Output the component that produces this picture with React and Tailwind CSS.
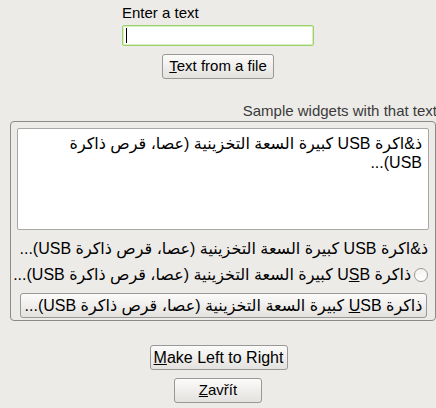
import React from "react";

const arabic = "كبيرة السعة التخزينية (عصا، قرص ذاكرة USB)...";

function GtkButton({ className = "", children }) {
  return (
    <div
      className={
        "flex items-center justify-center whitespace-nowrap rounded-[3px] border border-[#989898] bg-gradient-to-b from-[#fbfbfa] to-[#e4e2df] text-[15px] text-black " +
        className
      }
    >
      {children}
    </div>
  );
}

export default function App() {
  return (
    <div
      className="relative h-[408px] w-[436px] overflow-hidden bg-[#edebe8] text-black"
      style={{ fontFamily: '"Liberation Sans", "DejaVu Sans", sans-serif' }}
    >
      <div className="flex flex-col items-center">
        <div className="flex w-[192px] flex-col">
          <div className="mt-[4px] h-[17px] text-[15px] leading-[17px]">Enter a text</div>
          <div className="mt-[4px] flex h-[21px] items-center rounded-[2px] border border-[#9bd06a] bg-white pl-[3px] shadow-[inset_0_0_0_1px_#d8f0c0]">
            <div className="h-[15px] w-px bg-black" />
          </div>
        </div>
        <GtkButton className="mt-[8px] h-[25px] w-[112px]">
          <span>
            <u>T</u>ext from a file
          </span>
        </GtkButton>
      </div>

      <div className="mt-[23px] flex h-[17px] justify-end whitespace-nowrap text-[15px] leading-[17px] text-[#3a3a3a]">
        <span className="-mr-[1px]">Sample widgets with that text</span>
      </div>

      <div className="ml-[10px] mt-[2px] h-[200px] w-[426px] rounded-[4px] border border-[#8c8a87] px-[6px] pt-[6px]">
        <div
          dir="rtl"
          className="h-[102px] rounded-[2px] border border-[#a9a7a3] bg-white px-[6px] pt-[5px] text-[16px] leading-[19px]"
        >
          ذ&اكرة USB {arabic}
        </div>
        <div dir="rtl" className="mt-[9px] h-[20px] whitespace-nowrap pr-[1px] text-[16px] leading-[20px]">
          ذ&اكرة USB {arabic}
        </div>
        <div dir="rtl" className="mt-[6px] flex h-[20px] items-center whitespace-nowrap text-[16px] leading-[20px]">
          <div className="ml-[3px] mr-[1px] h-[14px] w-[14px] shrink-0 rounded-full border border-[#9a9894] bg-gradient-to-b from-[#f4f3f1] to-white" />
          <span>
            ذاكرة U<u>S</u>B {arabic}
          </span>
        </div>
        <GtkButton className="ml-[3px] mt-[8px] h-[25px] w-[407px] text-[16px]">
          <span dir="rtl">
            ذاكرة <u>U</u>SB {arabic}
          </span>
        </GtkButton>
      </div>

      <div className="flex flex-col items-center">
        <GtkButton className="ml-[1px] mt-[24px] h-[25px] w-[138px] text-[16px]">
          <span>
            <u>M</u>ake Left to Right
          </span>
        </GtkButton>
        <GtkButton className="mt-[8px] h-[25px] w-[88px]">
          <span>
            <u>Z</u>avřít
          </span>
        </GtkButton>
      </div>
    </div>
  );
}
